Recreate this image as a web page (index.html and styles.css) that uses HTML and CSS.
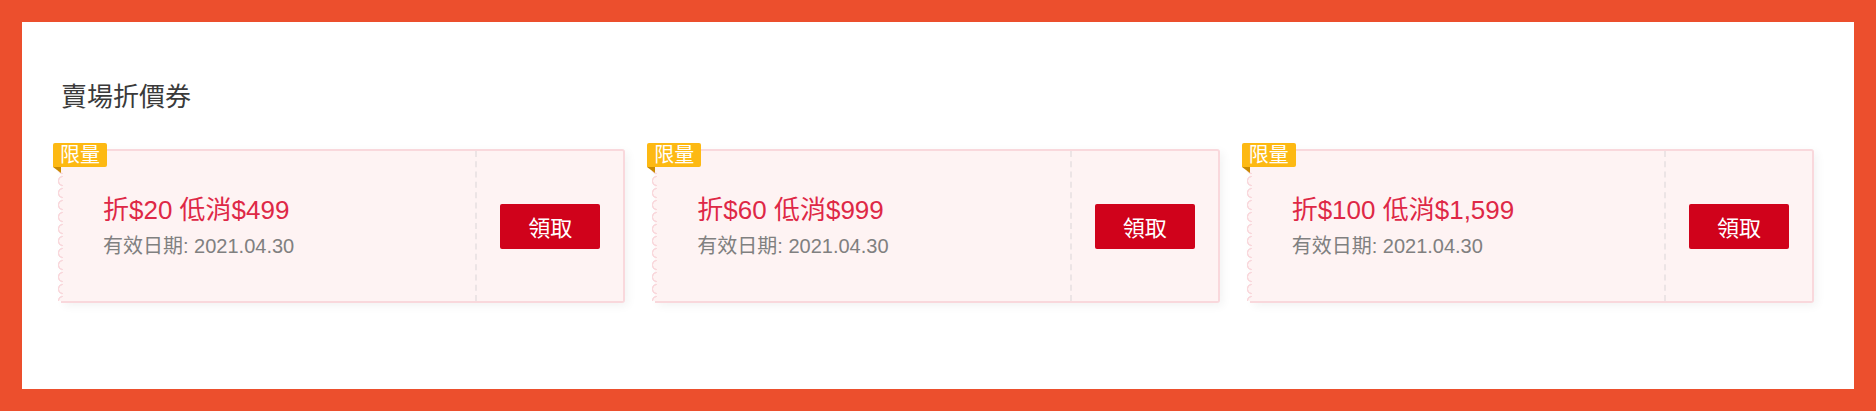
FILE: index.html
```html
<!DOCTYPE html>
<html lang="zh-Hant">
<head>
    <meta charset="UTF-8">
    <meta name="viewport" content="width=device-width, initial-scale=1.0">
    <title>賣場折價券</title>
    <link rel="stylesheet" href="styles.css">
</head>
<body>
    <div class="frame">
        <h2 class="section-title">賣場折價券</h2>
        <div class="coupon-list">
            <div class="coupon">
                <span class="tag">限量</span>
                <div class="coupon-info">
                    <div class="coupon-amount">折$20 低消$499</div>
                    <div class="coupon-date">有效日期: 2021.04.30</div>
                </div>
                <div class="coupon-action">
                    <button class="claim">領取</button>
                </div>
            </div>
            <div class="coupon">
                <span class="tag">限量</span>
                <div class="coupon-info">
                    <div class="coupon-amount">折$60 低消$999</div>
                    <div class="coupon-date">有效日期: 2021.04.30</div>
                </div>
                <div class="coupon-action">
                    <button class="claim">領取</button>
                </div>
            </div>
            <div class="coupon">
                <span class="tag">限量</span>
                <div class="coupon-info">
                    <div class="coupon-amount">折$100 低消$1,599</div>
                    <div class="coupon-date">有效日期: 2021.04.30</div>
                </div>
                <div class="coupon-action">
                    <button class="claim">領取</button>
                </div>
            </div>
        </div>
    </div>
</body>
</html>
```

FILE: styles.css
```css
html, body {
    margin: 0;
    height: 100%;
    font-family: "Liberation Sans", "Noto Sans CJK TC", sans-serif;
}

.frame {
    box-sizing: border-box;
    height: 100vh;
    border: 22px solid #ec4f2d;
    background: #fff;
    padding: 60px 40px 0 39px;
}

.section-title {
    margin: 0 0 36px;
    font-size: 26px;
    line-height: 31px;
    font-weight: normal;
    color: #3a3a3a;
}

.coupon-list {
    display: grid;
    grid-template-columns: repeat(3, 1fr);
    gap: 30px;
}

.coupon {
    position: relative;
    display: flex;
    height: 154px;
    box-sizing: border-box;
    background: #fef3f3;
    border: 2px solid #f9d8dc;
    border-left: none;
    border-radius: 0 3px 3px 0;
    box-shadow: 3px 3px 10px rgba(0, 0, 0, 0.05);
}

/* scalloped left edge */
.coupon::before {
    content: "";
    position: absolute;
    left: -4px;
    top: 0;
    bottom: 0;
    width: 6px;
    background:
        radial-gradient(circle at 6px 6px, #fef3f3 3.5px, #f9d8dc 4px, #f9d8dc 5px, transparent 5.5px)
        0 0 / 6px 12px repeat-y;
}

.tag {
    position: absolute;
    left: -8px;
    top: -8px;
    z-index: 1;
    width: 54px;
    height: 24px;
    line-height: 24px;
    text-align: center;
    font-size: 20px;
    color: #fff;
    background: #fdb913;
    border-radius: 2px 2px 2px 0;
}

.tag::after {
    content: "";
    position: absolute;
    left: 0;
    top: 100%;
    border-top: 6px solid #c98a00;
    border-left: 8px solid transparent;
}

.coupon-info {
    flex: 1;
    display: flex;
    flex-direction: column;
    justify-content: center;
    padding-left: 42px;
}

.coupon-amount {
    font-size: 26px;
    line-height: 32px;
    color: #de2846;
}

.coupon-date {
    margin-top: 7px;
    font-size: 20px;
    line-height: 26px;
    color: #808080;
}

.coupon-action {
    width: 146px;
    display: flex;
    align-items: center;
    justify-content: center;
    border-left: 2px dashed #ece4e5;
}

.claim {
    width: 100px;
    height: 45px;
    border: none;
    border-radius: 2px;
    background: #d0021b;
    color: #fff;
    font-family: inherit;
    font-size: 22px;
    cursor: pointer;
}
```
